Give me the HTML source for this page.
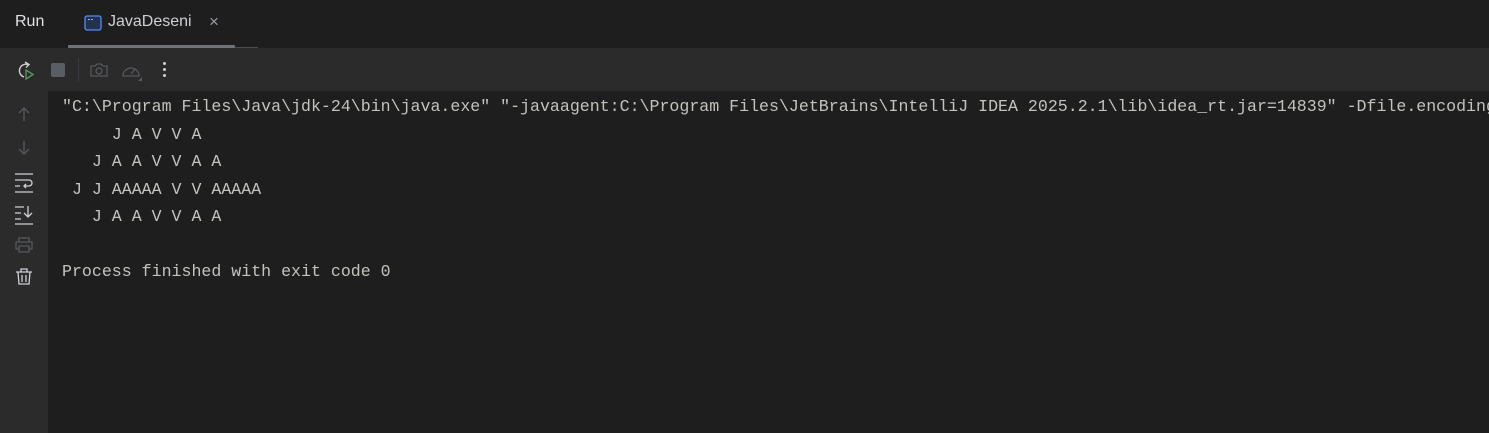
<!DOCTYPE html>
<html><head><style>
body{margin:0;width:1489px;height:433px;background:#1e1e1e;overflow:hidden;font-family:"Liberation Sans",sans-serif;position:relative}
.hdr{position:absolute;left:0;top:0;width:1489px;height:48px;background:#1e1e1e}
.tb{position:absolute;left:0;top:48px;width:1489px;height:43px;background:#2b2b2b}
.gut{position:absolute;left:0;top:91px;width:48px;height:342px;background:#2b2b2b}
.con{position:absolute;left:49px;top:91px;right:0;bottom:0;background:#1e1e1e}
.t{position:absolute;color:#dfe1e5;font-size:16px}
pre{position:absolute;left:62px;top:93px;margin:0;font-family:"Liberation Mono",monospace;font-size:16.6px;line-height:27.5px;color:#c4c2bc;white-space:pre}
svg{position:absolute}
</style></head><body>
<div class="hdr"></div>
<div class="t" style="left:15px;top:13px;">Run</div>
<svg style="left:84px;top:15px" width="18" height="16" viewBox="0 0 18 16"><rect x="1" y="1" width="16" height="14" rx="2" fill="#25324d" stroke="#548af7" stroke-width="1.3"/><rect x="4" y="4" width="2" height="1" fill="#8ab0f9"/><rect x="7" y="4" width="2" height="1" fill="#8ab0f9"/></svg>
<div class="t" style="left:108px;top:13px;color:#ced0d6">JavaDeseni</div>
<div class="t" style="left:209px;top:12px;color:#9a9da3;font-size:17px">×</div>
<div style="position:absolute;left:68px;top:45px;width:167px;height:3px;background:#6f737a;border-radius:1px"></div>
<div style="position:absolute;left:235px;top:47px;width:23px;height:1px;background:#4a4c50"></div>
<div class="tb"></div>
<svg style="left:15px;top:60px" width="22" height="22" viewBox="0 0 22 22"><path d="M13 4.5A6.5 6.5 0 1 0 9 17" fill="none" stroke="#ced0d6" stroke-width="1.4"/><path d="M10 2l4 2.5-3 3" fill="none" stroke="#ced0d6" stroke-width="1.4"/><path d="M11 10l7 4.5-7 4.5z" fill="none" stroke="#57965c" stroke-width="1.4"/></svg>
<div style="position:absolute;left:51px;top:63px;width:14px;height:14px;background:#5a5d63;border-radius:2px"></div>
<div style="position:absolute;left:78px;top:58px;width:1px;height:24px;background:#393b40"></div>
<svg style="left:89px;top:61px" width="20" height="18" viewBox="0 0 20 18"><path d="M2 5h4l2-2h4l2 2h4v10H2z" fill="none" stroke="#55585e" stroke-width="1.3"/><circle cx="10" cy="10" r="3" fill="none" stroke="#55585e" stroke-width="1.3"/></svg>
<svg style="left:121px;top:61px" width="22" height="20" viewBox="0 0 22 20"><path d="M2 15A8 8 0 0 1 18 15z" fill="none" stroke="#55585e" stroke-width="1.3"/><path d="M10 13l4-5" stroke="#55585e" stroke-width="1.3"/><path d="M21 16v4h-4z" fill="#55585e"/></svg>
<div style="position:absolute;left:163px;top:62px;width:3px;height:3px;background:#ced0d6;border-radius:2px;box-shadow:0 6px 0 #ced0d6,0 12px 0 #ced0d6"></div>
<div class="gut"></div>
<div class="con"></div>
<svg style="left:14px;top:104px" width="20" height="190" viewBox="0 0 20 190">
<g fill="none" stroke="#55585e" stroke-width="1.3"><path d="M10 4v13M5 9l5-5 5 5"/><path d="M10 37v13M5 45l5 5 5-5"/></g>
<g fill="none" stroke="#ced0d6" stroke-width="1.3"><path d="M1 70h18M1 76h14a3 3 0 0 1 0 6h-5M12 80l-2 2 2 2M1 82h5M1 88h18"/><path d="M1 103h9M1 109h6M1 115h6M1 120h18M14 102v11M10 109l4 4 4-4"/></g>
<g fill="none" stroke="#55585e" stroke-width="1.3"><path d="M5 138v-4h10v4M2 138h16v7h-3M5 145H2v-7M5 142h10v6H5z"/></g>
<g fill="none" stroke="#ced0d6" stroke-width="1.3"><path d="M2 168h16M7 168v-3h6v3M4 168l1 12h10l1-12M8 171v7M12 171v7"/></g>
</svg>
<pre>"C:\Program Files\Java\jdk-24\bin\java.exe" "-javaagent:C:\Program Files\JetBrains\IntelliJ IDEA 2025.2.1\lib\idea_rt.jar=14839" -Dfile.encoding=UTF-8
     J A V V A
   J A A V V A A
 J J AAAAA V V AAAAA
   J A A V V A A

Process finished with exit code 0</pre>
</body></html>
